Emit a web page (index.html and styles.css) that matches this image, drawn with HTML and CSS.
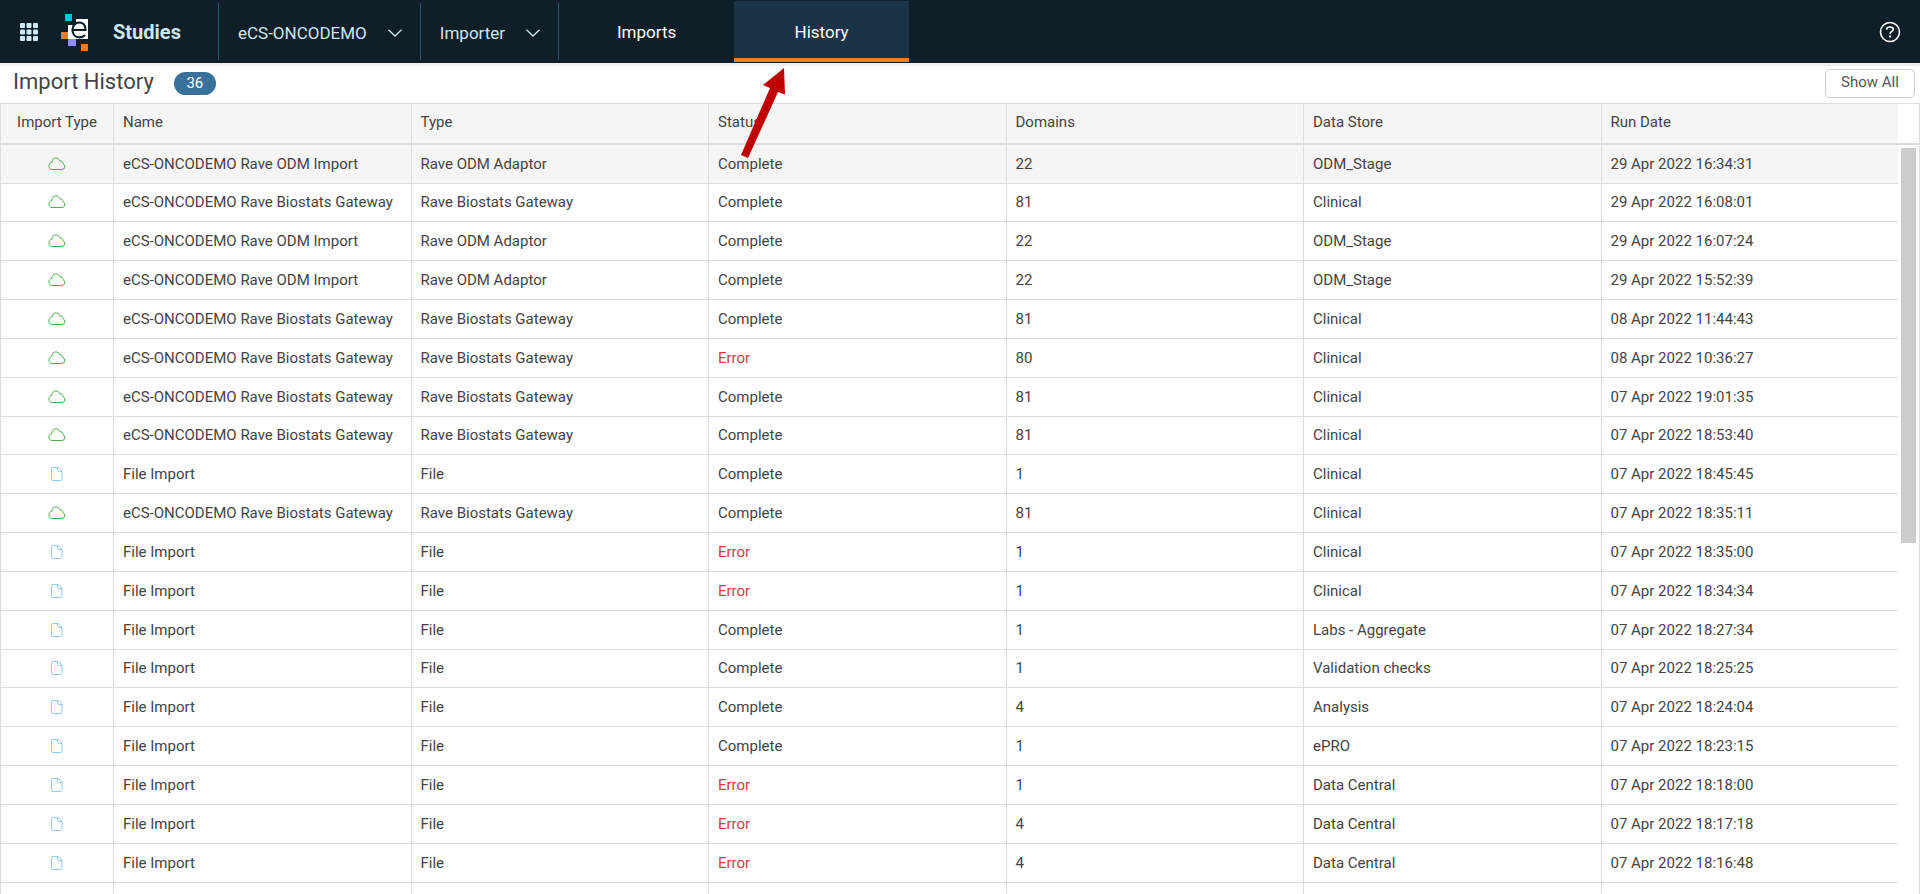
FILE: index.html
```html
<!DOCTYPE html>
<html lang="en">
<head>
  <meta charset="UTF-8" />
  <meta name="viewport" content="width=device-width, initial-scale=1.0"/>
  <title>Import History</title>
  <link rel="stylesheet" href="styles.css">
</head>
<body>

<!-- Icons used by the table rows -->
<svg width="0" height="0" class="sprite" aria-hidden="true">
  <symbol id="icon-cloud" viewBox="0 0 18 14">
    <path d="M4 12.500h10a3 3 0 0 0 .9-5.800c.2-2.200-1.500-3.200-3-2.800C11 1.800 9.500.900 7.800.900 5.500.900 4 2.600 4 5.200 2.200 5.600.900 7 .900 9c0 2 1.300 3.500 3.100 3.500z" fill="none" stroke="currentColor"/>
  </symbol>
  <symbol id="icon-file" viewBox="0 0 12 14">
    <path d="M2 .500h5.500l3.500 3.500v8a1.500 1.500 0 0 1-1.500 1.500H2A1.500 1.500 0 0 1 .500 12V2A1.500 1.500 0 0 1 2 .500zM6.500.500v3a1 1 0 0 0 1 1H11" fill="none" stroke="currentColor"/>
  </symbol>
</svg>

<header class="topbar">
  <div class="brand">
    <button type="button" class="icon-button" aria-label="Apps">
      <svg width="18" height="18" viewBox="0 0 18 18" fill="currentColor">
        <rect x="0" y="0" width="5" height="5" rx="1"/><rect x="6.500" y="0" width="5" height="5" rx="1"/><rect x="13" y="0" width="5" height="5" rx="1"/>
        <rect x="0" y="6.500" width="5" height="5" rx="1"/><rect x="6.500" y="6.500" width="5" height="5" rx="1"/><rect x="13" y="6.500" width="5" height="5" rx="1"/>
        <rect x="0" y="13" width="5" height="5" rx="1"/><rect x="6.500" y="13" width="5" height="5" rx="1"/><rect x="13" y="13" width="5" height="5" rx="1"/>
      </svg>
    </button>
    <svg class="logo" width="28" height="38" viewBox="0 0 28 38">
      <path d="M15 5h12v20H7V11h8z" fill="#fff"/>
      <rect x="4" y="0" width="7" height="7" fill="#00bfdf"/>
      <rect x="0" y="18" width="7" height="7" fill="#f07d1a"/>
      <rect x="7" y="25" width="8" height="7" fill="#8f8cff"/>
      <rect x="20" y="30" width="7" height="7" fill="#f07d1a"/>
      <path d="M11.500 16h13c0-4.800-2.400-7.500-6.200-7.500-4 0-6.800 3-6.800 7.400 0 4.600 2.700 7.400 7 7.400 2.400 0 4.300-.8 5.600-2.200" fill="none" stroke="#0f1f29" stroke-width="2.200"/>
    </svg>
    <a href="#" class="brand-name">Studies</a>
  </div>
  <button type="button" class="picker">eCS-ONCODEMO
    <svg width="14" height="8" viewBox="0 0 14 8"><path d="M.5.800 7 7 13.500.800" fill="none" stroke="currentColor" stroke-width="1.300"/></svg>
  </button>
  <button type="button" class="picker">Importer
    <svg width="14" height="8" viewBox="0 0 14 8"><path d="M.5.800 7 7 13.500.800" fill="none" stroke="currentColor" stroke-width="1.300"/></svg>
  </button>
  <nav class="tabs">
    <a href="#" class="tab">Imports</a>
    <a href="#" class="tab active">History</a>
  </nav>
  <button type="button" class="icon-button help" aria-label="Help">
    <svg width="22" height="22" viewBox="0 0 22 22" fill="none" stroke="currentColor">
      <circle cx="11" cy="11" r="9.500" stroke-width="1.600"/>
      <path d="M7.700 8.700V8c0-1.200 1-2 3.200-2s3.400.8 3.400 2.300c0 2.200-3.300 1.900-3.300 4.500" stroke-width="1.600"/>
      <path d="M11 14.500v2" stroke-width="2"/>
    </svg>
  </button>
</header>

<div class="title-row">
  <h1>Import History</h1>
  <span class="count">36</span>
  <button type="button" class="show-all">Show All</button>
</div>

<main class="grid">
  <div class="table-wrap">
    <table class="history">
      <thead>
        <tr>
          <th class="col-icon">Import Type</th>
          <th>Name</th>
          <th>Type</th>
          <th>Status</th>
          <th>Domains</th>
          <th>Data Store</th>
          <th>Run Date</th>
        </tr>
      </thead>
      <tbody id="rows"></tbody>
    </table>
  </div>
  <div class="scroll">
    <div class="scroll-head"></div>
    <div class="scroll-track"><div class="scroll-thumb"></div></div>
  </div>
</main>

<!-- Callout pointing at the active tab -->
<svg class="arrow" width="46" height="92" viewBox="0 0 46 92" aria-hidden="true">
  <path d="M0 87 29 20 22 17 43 0 44 26.500 37 24 7 90z" fill="#c00000"/>
</svg>

<script>
  const odm = ["cloud", "eCS-ONCODEMO Rave ODM Import", "Rave ODM Adaptor"];
  const gateway = ["cloud", "eCS-ONCODEMO Rave Biostats Gateway", "Rave Biostats Gateway"];
  const file = ["file", "File Import", "File"];

  const imports = [
    [...odm, "Complete", 22, "ODM_Stage", "29 Apr 2022 16:34:31"],
    [...gateway, "Complete", 81, "Clinical", "29 Apr 2022 16:08:01"],
    [...odm, "Complete", 22, "ODM_Stage", "29 Apr 2022 16:07:24"],
    [...odm, "Complete", 22, "ODM_Stage", "29 Apr 2022 15:52:39"],
    [...gateway, "Complete", 81, "Clinical", "08 Apr 2022 11:44:43"],
    [...gateway, "Error", 80, "Clinical", "08 Apr 2022 10:36:27"],
    [...gateway, "Complete", 81, "Clinical", "07 Apr 2022 19:01:35"],
    [...gateway, "Complete", 81, "Clinical", "07 Apr 2022 18:53:40"],
    [...file, "Complete", 1, "Clinical", "07 Apr 2022 18:45:45"],
    [...gateway, "Complete", 81, "Clinical", "07 Apr 2022 18:35:11"],
    [...file, "Error", 1, "Clinical", "07 Apr 2022 18:35:00"],
    [...file, "Error", 1, "Clinical", "07 Apr 2022 18:34:34"],
    [...file, "Complete", 1, "Labs - Aggregate", "07 Apr 2022 18:27:34"],
    [...file, "Complete", 1, "Validation checks", "07 Apr 2022 18:25:25"],
    [...file, "Complete", 4, "Analysis", "07 Apr 2022 18:24:04"],
    [...file, "Complete", 1, "ePRO", "07 Apr 2022 18:23:15"],
    [...file, "Error", 1, "Data Central", "07 Apr 2022 18:18:00"],
    [...file, "Error", 4, "Data Central", "07 Apr 2022 18:17:18"],
    [...file, "Error", 4, "Data Central", "07 Apr 2022 18:16:48"],
    ["", "", "", "", "", "", ""]
  ];

  document.getElementById("rows").innerHTML = imports.map(([icon, name, type, status, domains, store, date]) => `
    <tr>
      <td class="col-icon">${icon ? `<svg class="${icon}"><use href="#icon-${icon}"/></svg>` : ""}</td>
      <td>${name}</td>
      <td>${type}</td>
      <td class="${status === "Error" ? "error" : ""}">${status}</td>
      <td>${domains}</td>
      <td>${store}</td>
      <td>${date}</td>
    </tr>`).join("");
</script>

</body>
</html>
```
FILE: styles.css
```css
* {
  box-sizing: border-box;
}
body {
  font-family: Roboto, "Liberation Sans", sans-serif;
  font-size: 15px;
  color: #444;
  background-color: #fff;
  margin: 0;
  height: 100vh;
  overflow: hidden;
  display: flex;
  flex-direction: column;
}
button {
  font-family: inherit;
  cursor: pointer;
}
a {
  text-decoration: none;
}
.sprite {
  position: absolute;
}

/* Top bar */
.topbar {
  display: flex;
  align-items: center;
  flex-shrink: 0;
  height: 63px;
  background-color: #0f1f29;
  color: #cce7f5;
  box-shadow: 0 3px 0 #eee;
}
.brand {
  display: flex;
  align-items: center;
  width: 218px;
  padding-left: 20px;
}
.icon-button {
  display: flex;
  padding: 0;
  border: none;
  background: none;
  color: inherit;
}
.logo {
  margin: 2px 24px 0 23px;
}
.brand-name {
  color: inherit;
  font-size: 20px;
  font-weight: bold;
}
.picker {
  display: flex;
  align-items: center;
  gap: 21px;
  height: 57px;
  padding: 2px 18px 0 19px;
  border: none;
  border-left: 1px solid #25506e;
  background: none;
  color: inherit;
  font-size: 17px;
}
.tabs {
  display: flex;
  height: 57px;
  border-left: 1px solid #25506e;
}
.tab {
  width: 175px;
  height: 61px;
  margin-top: -2px;
  border-bottom: 4px solid transparent;
  color: #fff;
  font-size: 17px;
  line-height: 63px;
  text-align: center;
}
.tab.active {
  background-color: #193347;
  border-color: #f07d1a;
}
.help {
  margin-left: auto;
  margin-right: 19px;
  color: #fff;
}

/* Title row */
.title-row {
  display: flex;
  align-items: center;
  flex-shrink: 0;
  height: 40px;
  padding: 0 5px 0 13px;
}
h1 {
  margin: 0;
  padding-bottom: 3px;
  font-size: 22px;
  font-weight: normal;
}
.count {
  margin-left: 20px;
  width: 42px;
  border-radius: 12px;
  background-color: #39719b;
  color: #fff;
  line-height: 23px;
  text-align: center;
}
.show-all {
  margin-left: auto;
  width: 90px;
  height: 29px;
  padding: 0 0 2px;
  border: 1px solid #ccc;
  border-radius: 5px;
  background-color: #fff;
  color: #555;
  font-size: 15px;
}

/* History table */
.grid {
  display: flex;
  flex: 1;
  min-height: 0;
  overflow: hidden;
  border: 1px solid #ddd;
  border-bottom: none;
}
.table-wrap {
  flex: 1;
  overflow: hidden;
}
.history {
  width: 100%;
  table-layout: fixed;
  border-collapse: separate;
  border-spacing: 0;
}
th, td {
  height: 39px;
  padding: 0 9px;
  border-bottom: 1px solid #ddd;
  border-left: 1px solid #ddd;
  font-weight: normal;
  line-height: 18px;
  text-align: left;
  white-space: nowrap;
}
th {
  height: 41px;
  padding-bottom: 4px;
  border-bottom-width: 2px;
  background-color: #f5f5f5;
}
.col-icon {
  width: 112px;
  padding-left: 0;
  padding-right: 0;
  border-left: none;
  text-align: center;
}
tbody tr:first-child {
  background-color: #f5f5f5;
}
tbody tr:nth-child(6n+2) td {
  height: 38px;
  padding-bottom: 1px;
}
.error {
  color: #d63e3e;
}
.cloud, .file {
  display: block;
  margin: 0 auto;
}
.cloud {
  width: 18px;
  height: 14px;
  color: #4caf50;
}
.file {
  width: 12px;
  height: 14px;
  color: #90caf9;
}
.scroll {
  display: flex;
  flex-direction: column;
  width: 21px;
}
.scroll-head {
  height: 41px;
  border-bottom: 2px solid #ddd;
}
.scroll-track {
  flex: 1;
  padding: 3px 3px 0;
}
.scroll-thumb {
  height: 53%;
  background-color: #ccc;
}

.arrow {
  position: absolute;
  left: 741px;
  top: 68px;
}
```
